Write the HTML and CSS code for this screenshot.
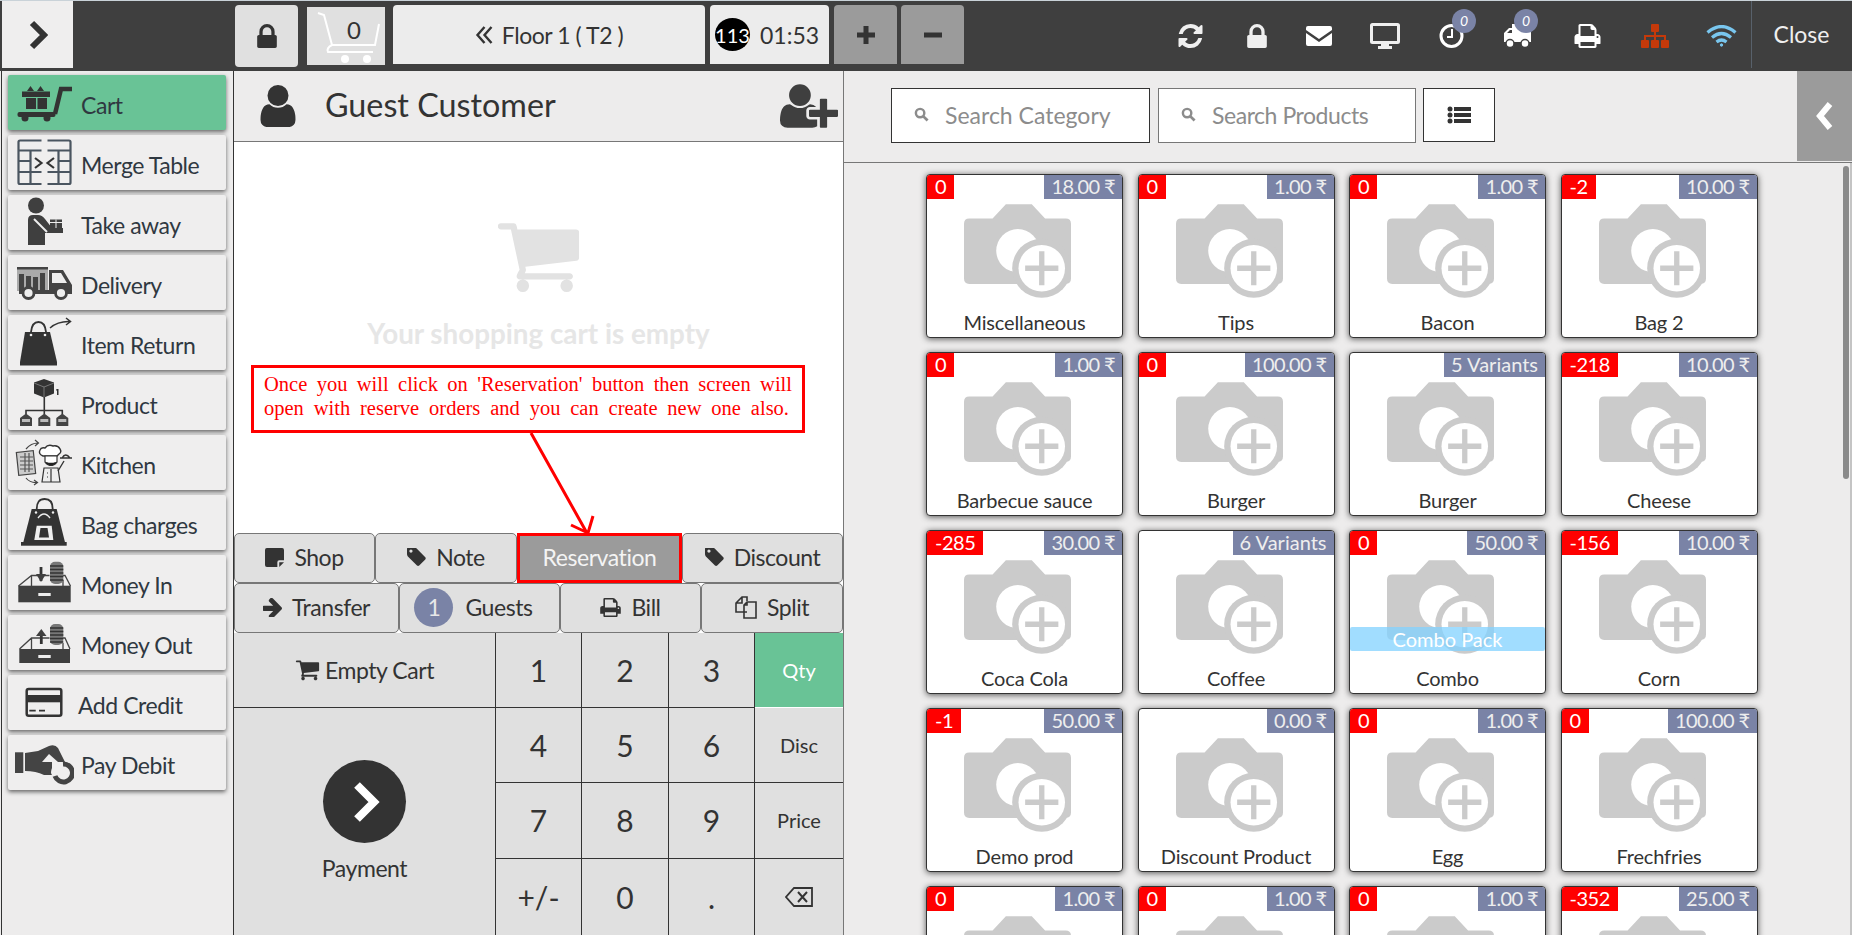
FILE: index.html
```html
<!DOCTYPE html>
<html lang="en">
<head>
    <meta charset="UTF-8">
    <title>POS</title>
    <link rel="stylesheet" href="styles.css">
</head>
<body>
    <svg class="defs">
        <symbol id="cam" viewBox="0 0 322 282">
            <path d="M16 43h70l40-43h78l40 43h62q16 0 16 16v165q0 16-16 16H16q-16 0-16-16V59q0-16 16-16z" fill="#cbcbcb"/>
            <circle cx="162" cy="140" r="65" fill="#fff"/>
            <circle cx="234" cy="193" r="89" fill="#cbcbcb"/>
            <circle cx="234" cy="193" r="70" fill="#fff"/>
            <path d="M184 185h42v-43h16v43h42v16h-42v43h-16v-43h-42z" fill="#cbcbcb"/>
        </symbol>
        <symbol id="fa-cart" viewBox="0 0 1664 1792"><path d="M640 1536q0 52-38 90t-90 38-90-38-38-90 38-90 90-38 90 38 38 90zm896 0q0 52-38 90t-90 38-90-38-38-90 38-90 90-38 90 38 38 90zm128-1088v512q0 24-16.5 42.5t-40.5 21.5l-1044 122q13 60 13 70 0 16-24 64h920q26 0 45 19t19 45-19 45-45 19h-1024q-26 0-45-19t-19-45q0-11 8-31.5t16-36 21.5-40 15.5-29.5l-177-823h-204q-26 0-45-19t-19-45 19-45 45-19h256q16 0 28.5 6.5t19.5 15.5 13 24.5 8 26 5.5 29.5 4.5 26h1201q26 0 45 19t19 45z"/></symbol>
        <symbol id="fa-lock" viewBox="320 128 1152 1408"><path d="M640 768h512v-192q0-106-75-181t-181-75-181 75-75 181v192zm832 96v576q0 40-28 68t-68 28h-960q-40 0-68-28t-28-68v-576q0-40 28-68t68-28h32v-192q0-184 132-316t316-132 316 132 132 316v192h32q40 0 68 28t28 68z"/></symbol>
        <symbol id="fa-tag" viewBox="128 192 1536 1536"><path d="M576 448q0-53-37.5-90.5t-90.5-37.5-90.5 37.5-37.5 90.5 37.5 90.5 90.5 37.5 90.5-37.5 37.5-90.5zm1067 576q0 53-37 90l-491 492q-39 37-91 37-53 0-90-37l-715-716q-38-37-64.5-101t-26.5-117v-416q0-52 38-90t90-38h416q53 0 117 26.5t102 64.5l715 714q37 39 37 91z"/></symbol>
        <symbol id="fa-print" viewBox="64 128 1664 1536"><path d="M448 1536h896v-256h-896v256zm0-640h896v-384h-160q-40 0-68-28t-28-68v-160h-640v640zm1152 64q0-26-19-45t-45-19-45 19-19 45 19 45 45 19 45-19 19-45zm128 0v416q0 13-9.5 22.5t-22.5 9.5h-224v160q0 40-28 68t-68 28h-960q-40 0-68-28t-28-68v-160h-224q-13 0-22.5-9.5t-9.5-22.5v-416q0-79 56.5-135.5t135.5-56.5h64v-544q0-40 28-68t68-28h672q40 0 88 20t76 48l152 152q28 28 48 76t20 88v256h64q79 0 135.5 56.5t56.5 135.5z"/></symbol>
        <symbol id="search" viewBox="0 0 16 16"><circle cx="6.5" cy="6.5" r="4.5" fill="none" stroke="currentColor" stroke-width="2.6"/><path d="M10 10l4.5 4.5" stroke="currentColor" stroke-width="3"/></symbol>
    </svg>

    <header class="topbar">
        <div class="toggle">
            <svg width="20" height="30" viewBox="0 0 20 30"><path d="M4 3l12 12L4 27" fill="none" stroke="#333" stroke-width="6"/></svg>
        </div>
        <button class="top-btn lock-btn"><svg width="20" height="24" fill="#333"><use href="#fa-lock"/></svg></button>
        <div class="cart-count">
            <svg width="78" height="58" viewBox="0 0 78 58"><path d="M11 6l6 2 8 30h43l4-21M25 38q-6 3-4 7h45" fill="none" stroke="#fff" stroke-width="2"/><circle cx="38" cy="52" r="4" fill="#fff"/><circle cx="60" cy="52" r="4" fill="#fff"/></svg>
            <span class="cart-num">0</span>
        </div>
        <button class="top-btn floor-btn">
            <svg width="19" height="20" viewBox="0 0 18 20"><path d="M9 2L2 10l7 8M16 2l-7 8 7 8" fill="none" stroke="#333" stroke-width="2.4"/></svg>
            <span class="tight">Floor 1 ( T2 )</span>
        </button>
        <button class="top-btn timer-btn"><span class="timer-badge">113</span> 01:53</button>
        <button class="top-btn grey-btn"><svg width="20" height="20" viewBox="0 0 20 20"><path d="M10 1v18M1 10h18" stroke="#333" stroke-width="5"/></svg></button>
        <button class="top-btn grey-btn"><svg width="20" height="20" viewBox="0 0 20 20"><path d="M1 10h18" stroke="#333" stroke-width="5"/></svg></button>

        <div class="status-icons">
            <div class="status"><svg width="25" height="24" viewBox="128 128 1536 1536" fill="#efefef"><path d="M1639 1056q0 5-1 7-64 268-268 434.5t-478 166.5q-146 0-282.5-55t-243.5-157l-129 129q-19 19-45 19t-45-19-19-45v-448q0-26 19-45t45-19h448q26 0 45 19t19 45-19 45l-137 137q71 66 161 102t187 36q134 0 250-65t186-179q11-17 53-117 8-23 30-23h192q13 0 22.5 9.5t9.5 22.5zm25-800v448q0 26-19 45t-45 19h-448q-26 0-45-19t-19-45 19-45l138-138q-148-137-349-137-134 0-250 65t-186 179q-11 17-53 117-8 23-30 23h-199q-13 0-22.5-9.5t-9.5-22.5v-7q65-268 270-434.5t480-166.5q146 0 284 55.5t245 156.5l130-129q19-19 45-19t45 19 19 45z"/></svg></div>
            <div class="status"><svg width="20" height="24" fill="#efefef"><use href="#fa-lock"/></svg></div>
            <div class="status"><svg width="26" height="20" viewBox="0 0 26 20"><path d="M2 0h22q2 0 2 2v2L13 13 0 4V2q0-2 2-2zM0 7l13 9 13-9v11q0 2-2 2H2q-2 0-2-2z" fill="#fff"/></svg></div>
            <div class="status"><svg width="30" height="26" viewBox="0 0 30 26"><rect x="1.5" y="1.5" width="27" height="18" rx="1" fill="#3f3f3f" stroke="#efefef" stroke-width="3"/><path d="M11 21h8v2h3v3H8v-3h3z" fill="#efefef"/></svg></div>
            <div class="status">
                <svg width="25" height="24" viewBox="0 0 25 24"><circle cx="12.5" cy="12" r="10.5" fill="none" stroke="#fff" stroke-width="3"/><path d="M13 5v8H8" fill="none" stroke="#fff" stroke-width="2"/></svg>
                <span class="status-badge">0</span>
            </div>
            <div class="status">
                <svg width="27" height="24" viewBox="0 0 27 24"><path d="M8 0h19v18H0V9l5-5h3zM3 9h5V6H6z" fill="#fff" fill-rule="evenodd"/><circle cx="6" cy="19.500" r="4" fill="#fff" stroke="#3f3f3f" stroke-width="1.500"/><circle cx="21" cy="19.500" r="4" fill="#fff" stroke="#3f3f3f" stroke-width="1.500"/></svg>
                <span class="status-badge badge-truck">0</span>
            </div>
            <div class="status"><svg width="27" height="24" fill="#fff"><use href="#fa-print"/></svg></div>
            <div class="status"><svg width="28" height="24" viewBox="0 0 28 24" fill="#c4390a"><rect x="10" y="0" width="8" height="8" rx="1"/><rect x="0" y="16" width="8" height="8" rx="1"/><rect x="10" y="16" width="8" height="8" rx="1"/><rect x="20" y="16" width="8" height="8" rx="1"/><path d="M13 8h2v3h10v5h-2v-3h-8v3h-2v-3H5v3H3v-5h10z"/></svg></div>
            <div class="status"><svg width="31" height="22" viewBox="0 0 31 22" fill="none" stroke="#79c6ee" stroke-width="3.200"><path d="M1.500 7.500q14-12 28 0M6 12.500q9.500-8 19 0M10.500 17q5-4 10 0"/><circle cx="15.500" cy="20" r="1.200" fill="#79c6ee" stroke-width="1"/></svg></div>
        </div>
        <div class="close-btn">Close</div>
    </header>

    <main class="layout">
        <aside class="sidebar">
            <a class="side-item active">
                <svg class="side-ico" viewBox="0 0 60 55" fill="#333"><path d="M13 16l3.500-5 3.500 5zM23 16l3.500-5 3.500 5z"/><rect x="8" y="16.500" width="28" height="5.500"/><path d="M12 23h10v11H12zM23.500 23H33v11h-9.500z"/><path d="M58 14H47l-6 25" fill="none" stroke="#333" stroke-width="4.500"/><rect x="3.500" y="37" width="38" height="5" rx="2"/><circle cx="11" cy="43" r="3.500"/><circle cx="33" cy="43" r="3.500"/></svg>
                <span class="side-label">Cart</span>
            </a>
            <a class="side-item">
                <svg class="side-ico" viewBox="0 0 60 55" fill="none" stroke="#4a5560" stroke-width="2.200"><path d="M27.500 5.500H6q-1.500 0-1.500 1.500v40.500q0 1.500 1.500 1.500h21.500M4.500 15.500h23M4.500 26h12M4.500 37h23M16.500 15.500V49"/><path d="M33.500 5.500H55q1.500 0 1.500 1.500v40.500q0 1.500-1.500 1.500H33.500M33.500 15.500h23M44.500 26h12M33.500 37h23M44.500 15.500V49"/><path d="M21 23l6.500 5-6.500 5M40 23l-6.500 5 6.500 5" stroke="#333"/></svg>
                <span class="side-label">Merge Table</span>
            </a>
            <a class="side-item">
                <svg class="side-ico" viewBox="0 0 60 55" fill="#3f3f3f"><circle cx="22" cy="10.500" r="8"/><path d="M14 25q0-5 5-5h5q4 0 7 4l7 9h11v5H31v12H14z"/><path d="M20 24l13 13" stroke="#eee" stroke-width="2" fill="none"/><rect x="36" y="24.500" width="12" height="8.500"/><path d="M36 27.500h12M42 24.500V33" stroke="#eee"/></svg>
                <span class="side-label">Take away</span>
            </a>
            <a class="side-item">
                <svg class="side-ico" viewBox="0 0 60 55" fill="#444"><rect x="3" y="13" width="31" height="23" fill="#aaa"/><rect x="3" y="12" width="31" height="2.500"/><path d="M5 19h5v16H5zM12 21h5v14h-5zM19 22h5v13h-5zM26 18h5v17h-5z"/><path d="M35 15h14l9 15v9H5v-4h30z"/><path d="M38 18h9l6 10H38z" fill="#eee"/><circle cx="14.500" cy="38" r="5.500" fill="#eee" stroke="#444" stroke-width="2.800"/><circle cx="47" cy="38" r="5.500" fill="#eee" stroke="#444" stroke-width="2.800"/></svg>
                <span class="side-label">Delivery</span>
            </a>
            <a class="side-item">
                <svg class="side-ico" viewBox="0 0 60 55" fill="#333"><path d="M11 17h25l7 30H6z"/><rect x="6" y="47" width="37" height="3.500"/><path d="M17 17q1-10 7.500-10T32 17" fill="none" stroke="#333" stroke-width="1.800"/><circle cx="17" cy="20" r="1.300" fill="#eee"/><circle cx="31" cy="20" r="1.300" fill="#eee"/><path d="M36 13q8-7 20-6.500M52 3l4.500 3.500-4.500 3.500" fill="none" stroke="#333" stroke-width="1.500"/></svg>
                <span class="side-label">Item Return</span>
            </a>
            <a class="side-item">
                <svg class="side-ico" viewBox="0 0 60 55" fill="#333"><path d="M30 4l10 3.500v11l-10 4-10-4v-11z"/><path d="M20 8l10 4 10-4M30 12v10" stroke="#777" fill="none"/><path d="M42.500 14h2v6h-1.500v-4.500h-1z"/><path d="M30.300 22v14M12 39v-3.500h36.300V39M30.300 35.500V39" fill="none" stroke="#333" stroke-width="1.600"/><path d="M6 43l6-4.500 6 4.500v8H6zM24.300 43l6-4.500 6 4.500v8h-12zM42.300 43l6-4.500 6 4.500v8h-12z" fill="#444"/><path d="M8 44h8v3H8zM26.300 44h8v3h-8zM44.300 44h8v3h-8z" fill="#bbb"/></svg>
                <span class="side-label">Product</span>
            </a>
            <a class="side-item">
                <svg class="side-ico" viewBox="0 0 60 55" fill="none" stroke="#444" stroke-width="1.200"><rect x="3.500" y="16.500" width="17" height="23" transform="rotate(-6 12 28)" fill="#ccc"/><path d="M6 22h13M6 26h13M6 30h13M6 34h13M11 18v19M15 18v19" stroke="#555"/><path d="M12 14q5-6 12-6M21 5l3.500 3-3.500 3M12 43q4 5 11 4.500M20 45l3.500 2.500L20 50"/><path d="M29 21q-5-2-3-6 1-3 5-2 3-4 8-2 5-1 7 3 2 3-1 5l-2 2z" fill="#fff" stroke="#333" stroke-width="1.400"/><path d="M31 21h12v6q-6 7-12 0z" fill="#fff" stroke="#333"/><path d="M32 28q5 2 10 0" stroke="#222" stroke-width="2.400"/><path d="M30 33h14l2 14H28z" fill="#eee" stroke="#333" stroke-width="1.200"/><path d="M37 34v13M33 38h1M33 42h1" stroke="#333"/><path d="M44 36l6-10M46 23h12M48 23q3.500-6 8 0" stroke="#333" stroke-width="1.400"/></svg>
                <span class="side-label">Kitchen</span>
            </a>
            <a class="side-item">
                <svg class="side-ico" viewBox="0 0 60 55" fill="#333"><path d="M17.700 14h25l8.300 33.300H9.300z"/><rect x="7" y="47" width="45.700" height="3.700"/><path d="M22.700 14q0-10 8-10t8 10" fill="none" stroke="#333" stroke-width="1.800"/><path d="M24 23q6-8 12 0" fill="none" stroke="#eee" stroke-width="1.400"/><circle cx="22" cy="17.500" r="1.200" fill="#eee"/><circle cx="39" cy="17.500" r="1.200" fill="#eee"/><path d="M22.700 30.700h15l1.600 14.300h-19z" fill="#eee"/><path d="M26.500 33h7l1.500 9.500H25z"/></svg>
                <span class="side-label">Bag charges</span>
            </a>
            <a class="side-item">
                <svg class="side-ico" viewBox="0 0 60 55" fill="#3f3f3f"><path d="M4.500 31l13-10.500h18M49 20.500h2l5.500 10.500M17.500 20.500V31M49 25v6" fill="none" stroke="#444" stroke-width="1.300"/><rect x="4.300" y="30.700" width="52.400" height="16.600"/><rect x="24.300" y="38" width="12.400" height="3" fill="#eee"/><path d="M27 12v14" stroke="#333" stroke-width="2.800"/><path d="M22 19h10l-5 8z"/><rect x="36" y="6.700" width="13.300" height="22.300" rx="5" fill="#777"/><path d="M36 11h13.300M36 14.500h13.300M36 18h13.300M36 21.500h13.300M36 25h13.300" stroke="#333" stroke-width="1.300"/></svg>
                <span class="side-label">Money In</span>
            </a>
            <a class="side-item">
                <svg class="side-ico" viewBox="0 0 60 55" fill="#3f3f3f"><path d="M5.500 34l12-11h18M49 23h2l5 11M17.500 23v11M49 28v6" fill="none" stroke="#444" stroke-width="1.300"/><rect x="5.300" y="34" width="50.700" height="14"/><rect x="24.300" y="40" width="12.400" height="3" fill="#eee"/><path d="M27.300 19v10" stroke="#333" stroke-width="2.800"/><path d="M22 21h10.500l-5.200-7z"/><rect x="36" y="9" width="13.300" height="21" rx="5" fill="#777"/><path d="M36 13h13.300M36 16.500h13.300M36 20h13.300M36 23.500h13.300M36 27h13.300" stroke="#333" stroke-width="1.300"/></svg>
                <span class="side-label">Money Out</span>
            </a>
            <a class="side-item side-credit">
                <svg class="side-ico" viewBox="0 0 60 55" fill="#333"><rect x="12.700" y="14" width="34.600" height="26.700" rx="2" fill="none" stroke="#333" stroke-width="2.500"/><rect x="12.700" y="20" width="34.600" height="7.300"/><path d="M15.300 34.700h6.400v1.800h-6.400zM25 34.700h6v1.800h-6z"/></svg>
                <span class="side-label">Add Credit</span>
            </a>
            <a class="side-item">
                <svg class="side-ico" viewBox="0 0 60 55" fill="#444"><rect x="1" y="17.300" width="8.300" height="20.700"/><path d="M11 18l13-2 11-5q6-2 9 2l7 14h-7l-9-8-7 8h10v6q-2 5 0 7H30q-8-4-19-4z"/><path d="M41 41a9 9 0 1 0 8-12" fill="none" stroke="#444" stroke-width="5"/></svg>
                <span class="side-label">Pay Debit</span>
            </a>
        </aside>

        <section class="order">
            <div class="order-head">
                <svg class="user-ico" width="36" height="42" viewBox="256 128 1280 1536" fill="#333"><path d="M1536 1399q0 109-62.5 187t-150.5 78h-854q-88 0-150.500-78t-62.500-187q0-85 8.500-160.500t31.500-152 58.500-131 94-89 134.500-34.500q131 128 313 128t313-128q76 0 134.500 34.500t94 89 58.500 131 31.500 152 8.500 160.500zm-256-887q0 159-112.500 271.500t-271.500 112.500-271.500-112.500-112.500-271.500 112.500-271.500 271.500-112.500 271.500 112.500 112.500 271.500z"/></svg>
                <h1 class="customer">Guest Customer</h1>
                <svg class="add-user" width="58" height="44" viewBox="0 128 2048 1536" fill="#3f3f3f"><path d="M704 896q-159 0-271.500-112.500t-112.500-271.500 112.500-271.500 271.500-112.500 271.500 112.500 112.500 271.500-112.500 271.500-271.500 112.500zm960 128h352q13 0 22.500 9.500t9.500 22.500v192q0 13-9.500 22.500t-22.500 9.500h-352v352q0 13-9.500 22.500t-22.500 9.500h-192q-13 0-22.500-9.500t-9.500-22.500v-352h-352q-13 0-22.500-9.500t-9.500-22.500v-192q0-13 9.500-22.500t22.500-9.500h352v-352q0-13 9.500-22.500t22.500-9.500h192q13 0 22.500 9.500t9.500 22.500v352zm-736 224q0 52 38 90t90 38h256v238q-68 50-171 50h-874q-121 0-194-69t-73-190q0-53 3.500-103.500t14-109 26.500-108.500 43-97.500 62-81 85.500-53.500 111.500-20q19 0 39 17 79 61 154.500 91.500t164.500 30.500 164.500-30.500 154.500-91.500q20-17 39-17 132 0 217 96h-223q-52 0-90 38t-38 90v192z"/></svg>
            </div>
            <div class="cart-empty">
                <svg class="empty-ico" width="83" height="72" viewBox="0 192 1664 1472" fill="#e2e2e2"><use href="#fa-cart" width="1664" height="1792" y="0"/></svg>
                <p class="empty-text">Your shopping cart is empty</p>
                <div class="note">
                    <span class="note-line">Once you will click on 'Reservation' button then screen will</span>
                    <span class="note-line note-last">open with reserve orders and you can create new one also.</span>
                </div>
                <svg class="note-arrow" width="80" height="104" viewBox="0 0 80 104"><path d="M3 1l56.500 101M43 93l17 8 5-17" fill="none" stroke="#f00" stroke-width="3"/></svg>
            </div>
            <div class="tabs tabs-one">
                <button class="tab"><svg width="19" height="19" viewBox="0 0 20 20" fill="#333"><path d="M2 0h16q2 0 2 2v11h-5q-2 0-2 2v5H2q-2 0-2-2V2q0-2 2-2zM15 15h5l-5 5z"/></svg> Shop</button>
                <button class="tab"><svg width="19" height="19" fill="#333"><use href="#fa-tag"/></svg> Note</button>
                <button class="tab tab-marked">Reservation</button>
                <button class="tab"><svg width="19" height="19" fill="#333"><use href="#fa-tag"/></svg> Discount</button>
            </div>
            <div class="tabs tabs-two">
                <button class="tab"><svg width="19" height="19" viewBox="192 192 1408 1408" fill="#333"><path d="M1600 960q0 54-37 91l-651 651q-39 37-91 37-51 0-90-37l-75-75q-38-38-38-91t38-91l293-293h-704q-52 0-84.500-37.500t-32.500-90.500v-128q0-53 32.500-90.500t84.500-37.500h704l-293-294q-38-36-38-90t38-90l75-75q38-38 90-38 53 0 91 38l651 651q37 35 37 90z"/></svg> Transfer</button>
                <button class="tab tab-guests"><span class="guest-badge">1</span> Guests</button>
                <button class="tab"><svg width="21" height="19" fill="#333"><use href="#fa-print"/></svg> Bill</button>
                <button class="tab"><svg width="22" height="23" viewBox="0 0 22 23" fill="none" stroke="#333" stroke-width="1.600"><path d="M12 16H1V7l6-6h5v4M7 1v6H1"/><path d="M12 6h9v16H9V9zM12 6v3H9"/></svg> Split</button>
            </div>
            <div class="numpad">
                <button class="pad pad-empty"><svg width="25" height="25" fill="#333"><use href="#fa-cart"/></svg> Empty Cart</button>
                <button class="pad pad-num">1</button>
                <button class="pad pad-num">2</button>
                <button class="pad pad-num">3</button>
                <button class="pad pad-mode pad-on">Qty</button>
                <button class="pad pad-pay">
                    <span class="pay-circle"><svg width="30" height="42" viewBox="0 0 30 42"><path d="M5 4l17 17L5 38" fill="none" stroke="#fff" stroke-width="8"/></svg></span>
                    Payment
                </button>
                <button class="pad pad-num">4</button>
                <button class="pad pad-num">5</button>
                <button class="pad pad-num">6</button>
                <button class="pad pad-mode">Disc</button>
                <button class="pad pad-num">7</button>
                <button class="pad pad-num">8</button>
                <button class="pad pad-num">9</button>
                <button class="pad pad-mode">Price</button>
                <button class="pad pad-num">+/-</button>
                <button class="pad pad-num">0</button>
                <button class="pad pad-num">.</button>
                <button class="pad pad-mode"><svg width="28" height="20" viewBox="0 0 28 20" fill="none" stroke="#333" stroke-width="1.800"><path d="M9 1h18v18H9l-8-9z"/><path d="M13 5l9 10M22 5l-9 10" stroke-width="2"/></svg></button>
            </div>
        </section>

        <section class="catalog">
            <div class="search-row">
                <div class="search search-cat"><svg width="15" height="15"><use href="#search"/></svg><span>Search Category</span></div>
                <div class="search search-prod"><svg width="15" height="15"><use href="#search"/></svg><span class="tight">Search Products</span></div>
                <button class="list-btn"><svg width="24" height="18" viewBox="0 0 24 18" fill="#333"><circle cx="3" cy="3" r="2.500"/><circle cx="3" cy="9" r="2.500"/><circle cx="3" cy="15" r="2.500"/><rect x="7" y="1" width="17" height="4"/><rect x="7" y="7" width="17" height="4"/><rect x="7" y="13" width="17" height="4"/></svg></button>
                <div class="side-arrow"><svg width="18" height="30" viewBox="0 0 18 30"><path d="M14 3L4 15l10 12" fill="none" stroke="#fff" stroke-width="6"/></svg></div>
            </div>
            <div class="products">
                <div class="card"><div class="card-top"><span class="stock">0</span><span class="price">18.00 ₹</span></div><svg class="cam"><use href="#cam"/></svg><div class="name">Miscellaneous</div></div>
                <div class="card"><div class="card-top"><span class="stock">0</span><span class="price">1.00 ₹</span></div><svg class="cam"><use href="#cam"/></svg><div class="name">Tips</div></div>
                <div class="card"><div class="card-top"><span class="stock">0</span><span class="price">1.00 ₹</span></div><svg class="cam"><use href="#cam"/></svg><div class="name">Bacon</div></div>
                <div class="card"><div class="card-top"><span class="stock">-2</span><span class="price">10.00 ₹</span></div><svg class="cam"><use href="#cam"/></svg><div class="name">Bag 2</div></div>

                <div class="card"><div class="card-top"><span class="stock">0</span><span class="price">1.00 ₹</span></div><svg class="cam"><use href="#cam"/></svg><div class="name">Barbecue sauce</div></div>
                <div class="card"><div class="card-top"><span class="stock">0</span><span class="price">100.00 ₹</span></div><svg class="cam"><use href="#cam"/></svg><div class="name">Burger</div></div>
                <div class="card"><div class="card-top"><span class="price price-var">5 Variants</span></div><svg class="cam"><use href="#cam"/></svg><div class="name">Burger</div></div>
                <div class="card"><div class="card-top"><span class="stock">-218</span><span class="price">10.00 ₹</span></div><svg class="cam"><use href="#cam"/></svg><div class="name">Cheese</div></div>

                <div class="card"><div class="card-top"><span class="stock">-285</span><span class="price">30.00 ₹</span></div><svg class="cam"><use href="#cam"/></svg><div class="name">Coca Cola</div></div>
                <div class="card"><div class="card-top"><span class="price price-var">6 Variants</span></div><svg class="cam"><use href="#cam"/></svg><div class="name">Coffee</div></div>
                <div class="card"><div class="card-top"><span class="stock">0</span><span class="price">50.00 ₹</span></div><svg class="cam"><use href="#cam"/></svg><div class="combo">Combo Pack</div><div class="name">Combo</div></div>
                <div class="card"><div class="card-top"><span class="stock">-156</span><span class="price">10.00 ₹</span></div><svg class="cam"><use href="#cam"/></svg><div class="name">Corn</div></div>

                <div class="card"><div class="card-top"><span class="stock">-1</span><span class="price">50.00 ₹</span></div><svg class="cam"><use href="#cam"/></svg><div class="name">Demo prod</div></div>
                <div class="card"><div class="card-top"><span class="price">0.00 ₹</span></div><svg class="cam"><use href="#cam"/></svg><div class="name">Discount Product</div></div>
                <div class="card"><div class="card-top"><span class="stock">0</span><span class="price">1.00 ₹</span></div><svg class="cam"><use href="#cam"/></svg><div class="name">Egg</div></div>
                <div class="card"><div class="card-top"><span class="stock">0</span><span class="price">100.00 ₹</span></div><svg class="cam"><use href="#cam"/></svg><div class="name">Frechfries</div></div>

                <div class="card"><div class="card-top"><span class="stock">0</span><span class="price">1.00 ₹</span></div><svg class="cam"><use href="#cam"/></svg></div>
                <div class="card"><div class="card-top"><span class="stock">0</span><span class="price">1.00 ₹</span></div><svg class="cam"><use href="#cam"/></svg></div>
                <div class="card"><div class="card-top"><span class="stock">0</span><span class="price">1.00 ₹</span></div><svg class="cam"><use href="#cam"/></svg></div>
                <div class="card"><div class="card-top"><span class="stock">-352</span><span class="price">25.00 ₹</span></div><svg class="cam"><use href="#cam"/></svg></div>
                <div class="scroll-thumb"></div>
            </div>
        </section>
    </main>
</body>
</html>
```

FILE: styles.css
```css
* {
    box-sizing: border-box;
}
html, body {
    height: 100%;
}
body {
    margin: 0;
    overflow: hidden;
    background-color: #edecec;
    font-family: Lato, "Liberation Sans", sans-serif;
    color: #333;
}
button {
    font-family: inherit;
    color: inherit;
    padding: 0;
}
.defs {
    position: absolute;
    width: 0;
    height: 0;
}
.tight {
    letter-spacing: -0.45px;
}

/* top bar */
.topbar {
    display: flex;
    align-items: flex-start;
    height: 71px;
    padding-left: 2px;
    background-color: #3f3f3f;
    border-top: 1px solid #c9d2d8;
}
.toggle {
    display: flex;
    align-items: center;
    justify-content: center;
    width: 71px;
    height: 67px;
    background-color: #efeeee;
}
.top-btn {
    display: flex;
    align-items: center;
    justify-content: center;
    height: 59px;
    margin-top: 4px;
    border: 0;
    border-radius: 4px 4px 0 0;
    background-color: #ececec;
    font-size: 23px;
}
.lock-btn {
    width: 63px;
    height: 62px;
    margin-left: 162px;
    background-color: #e0e0e0;
    border-radius: 4px;
}
.cart-count {
    position: relative;
    width: 78px;
    height: 58px;
    margin: 6px 0 0 9px;
    background-color: #e0e0e0;
}
.cart-count svg {
    position: absolute;
    left: 0;
    top: 0;
}
.cart-num {
    position: absolute;
    left: 40px;
    top: 8px;
    font-size: 24px;
}
.floor-btn {
    width: 312px;
    margin-left: 8px;
    gap: 8px;
}
.timer-btn {
    width: 119px;
    margin-left: 5px;
    gap: 10px;
    justify-content: flex-start;
    padding-left: 5px;
}
.timer-badge {
    display: flex;
    align-items: center;
    justify-content: center;
    width: 35px;
    height: 33px;
    border-radius: 50%;
    background-color: #000;
    color: #fff;
    font-size: 20px;
}
.grey-btn {
    width: 63px;
    margin-left: 4px;
    background-color: #9b9b9b;
}
.timer-btn + .grey-btn {
    margin-left: 5px;
}
.status-icons {
    display: grid;
    grid-template-columns: 66px 68px 56px 76px 56px 76px 64px 72px 60px;
    margin-left: 193px;
    height: 69px;
}
.status {
    position: relative;
    display: flex;
    align-items: center;
    justify-content: center;
}
.status-badge {
    position: absolute;
    top: 8px;
    left: 29px;
    width: 24px;
    height: 24px;
    border-radius: 50%;
    background-color: #7a83a6;
    color: #fff;
    font-size: 14px;
    font-style: italic;
    line-height: 24px;
    text-align: center;
}
.badge-truck {
    left: 35px;
}
.close-btn {
    width: 100px;
    height: 67px;
    border-left: 1px solid #58616b;
    color: #efefef;
    font-size: 23px;
    line-height: 66px;
    text-align: center;
}

/* main columns */
.layout {
    display: flex;
    height: 864px;
}
.sidebar {
    flex: none;
    width: 232px;
    margin-left: 1px;
    padding: 4px 7px 0 6px;
    background-color: #edecec;
    border-left: 1px solid #333;
}
.side-item {
    display: flex;
    align-items: center;
    height: 55px;
    margin-bottom: 5px;
    background-color: #efeeee;
    box-shadow: 0 2px 4px #666;
    border-radius: 2px;
    font-size: 23px;
    letter-spacing: -0.45px;
    color: #2f3841;
}
.side-item.active {
    background-color: #69c396;
}
.side-label {
    padding-top: 5px;
}
.side-ico {
    flex: none;
    align-self: stretch;
    width: 60px;
    height: 55px;
    margin: 0 7px 0 6px;
}
.side-credit .side-ico {
    margin-right: 4px;
}

/* order column */
.order {
    flex: none;
    display: flex;
    flex-direction: column;
    width: 611px;
    border-left: 1px solid #333;
    border-right: 1px solid #777;
    background-color: #fff;
}
.order-head {
    display: flex;
    align-items: center;
    flex: none;
    height: 71px;
    padding: 0 5px 0 26px;
    background-color: #edecec;
    border-bottom: 1px solid #777;
}
.customer {
    margin: 0 0 4px 29px;
    font-size: 32.3px;
    font-weight: 400;
    color: #333;
}
.add-user {
    margin-left: auto;
}
.cart-empty {
    position: relative;
    flex: 1;
    text-align: center;
    padding-top: 78px;
}
.empty-ico {
    display: block;
    margin: 0 auto;
}
.empty-text {
    margin: 25px 0 0;
    font-size: 27.8px;
    font-weight: 700;
    color: #e6e6e6;
}
.note {
    position: absolute;
    left: 17px;
    top: 223px;
    width: 554px;
    height: 68px;
    padding: 4px 10px;
    border: 3px solid #f00;
    font-family: "Liberation Serif", serif;
    font-size: 20.5px;
    line-height: 24px;
    color: #f00;
    background-color: #fff;
}
.note-line {
    display: block;
    text-align: justify;
    text-align-last: justify;
}
.note-last {
    padding-right: 3px;
}
.note-arrow {
    position: absolute;
    left: 294px;
    top: 290px;
    z-index: 2;
}
.tabs {
    display: grid;
    flex: none;
    height: 50px;
}
.tabs-one {
    grid-template-columns: 141px 142px 165px 161px;
}
.tabs-two {
    grid-template-columns: 165px 161px 141px 142px;
}
.tab {
    display: flex;
    align-items: center;
    justify-content: center;
    gap: 10px;
    padding-bottom: 2px;
    background-color: #e0e0e0;
    border: 1px solid #777;
    border-radius: 5px;
    font-size: 23px;
    letter-spacing: -0.45px;
}
.tab-guests {
    padding-right: 12px;
}
.tab-marked {
    background-color: #9b9b9b;
    border: 3px solid #f00;
    border-radius: 0;
    color: #f4f4f4;
}
.guest-badge {
    width: 39px;
    height: 39px;
    margin-right: 2px;
    border-radius: 50%;
    background-color: #7a83a6;
    color: #e8e8e8;
    line-height: 39px;
}
.numpad {
    display: grid;
    flex: none;
    height: 302px;
    grid-template-columns: 262px 86px 87px 86px 88px;
    grid-template-rows: 75px 75px 76px 76px;
    background-color: #e0e0e0;
}
.pad {
    display: flex;
    align-items: center;
    justify-content: center;
    padding-bottom: 1px;
    background-color: #e0e0e0;
    border: 0;
    border-right: 1px solid #333;
    border-bottom: 1px solid #333;
    font-size: 30px;
    color: #333;
}
.pad-mode {
    border-right: 0;
    font-size: 20px;
}
.pad-on {
    background-color: #69c396;
    color: #fff;
    border-bottom-color: #fff;
}
.pad-empty {
    gap: 5px;
    font-size: 23px;
    letter-spacing: -0.45px;
}
.pad-pay {
    grid-row: span 3;
    flex-direction: column;
    gap: 11px;
    border-bottom: 0;
    font-size: 23px;
    letter-spacing: -0.45px;
}
.pay-circle {
    display: flex;
    align-items: center;
    justify-content: center;
    width: 83px;
    height: 83px;
    padding-left: 5px;
    border-radius: 50%;
    background-color: #333;
}
.numpad .pad:nth-last-child(-n+4) {
    border-bottom: 0;
}

/* catalog column */
.catalog {
    position: relative;
    flex: 1;
    overflow: hidden;
    background-color: #edecec;
}
.search-row {
    display: flex;
    align-items: flex-start;
    height: 92px;
    padding: 17px 0 0 47px;
    border-bottom: 1px solid #777;
}
.search {
    display: flex;
    align-items: center;
    gap: 16px;
    height: 55px;
    padding: 0 0 2px 22px;
    background-color: #fff;
    font-size: 23px;
    color: #8c8c8c;
}
.search svg {
    flex: none;
    color: #8c8c8c;
}
.search-cat {
    width: 259px;
    border: 1px solid #333;
}
.search-prod {
    width: 258px;
    margin-left: 8px;
    border: 1px solid #777;
}
.list-btn {
    display: flex;
    align-items: center;
    justify-content: center;
    width: 72px;
    height: 54px;
    margin-left: 7px;
    background-color: #fff;
    border: 1px solid #333;
}
.side-arrow {
    position: absolute;
    top: 0;
    right: 0;
    display: flex;
    align-items: center;
    justify-content: center;
    width: 55px;
    height: 90px;
    background-color: #9b9b9b;
}
.products {
    position: relative;
    display: grid;
    grid-template-columns: repeat(4, 197px);
    grid-auto-rows: 164px;
    column-gap: 14.5px;
    row-gap: 14px;
    height: 772px;
    padding: 11px 0 0 82px;
    border-right: 2px solid #c4c4c4;
}
.scroll-thumb {
    position: absolute;
    top: 3px;
    right: 1px;
    width: 6px;
    height: 313px;
    border-radius: 3px;
    background-color: #8a8a8a;
}
.card {
    position: relative;
    display: flex;
    flex-direction: column;
    background-color: #fff;
    border: 1px solid #333;
    border-radius: 4px;
    box-shadow: 0 1px 6px #555;
    overflow: hidden;
}
.card-top {
    display: flex;
    flex: none;
    height: 24px;
    font-size: 20px;
    line-height: 23px;
}
.stock {
    padding: 0 8px;
    background-color: #f00;
    color: #fff;
    letter-spacing: -0.5px;
}
.price {
    margin-left: auto;
    padding: 0 7px;
    background-color: #7a83a6;
    color: #eee;
    letter-spacing: -0.6px;
}
.price-var {
    letter-spacing: 0;
}
.cam {
    flex: none;
    width: 107px;
    height: 94px;
    margin: 5px 0 0 37px;
}
.name {
    margin-top: auto;
    padding-bottom: 3px;
    font-size: 20px;
    letter-spacing: -0.15px;
    line-height: 24px;
    text-align: center;
}
.combo {
    position: absolute;
    left: 0;
    right: 0;
    top: 96px;
    height: 24px;
    background-color: rgba(130, 210, 255, 0.75);
    border-radius: 2px;
    color: #fff;
    font-size: 20px;
    line-height: 24px;
    text-align: center;
}
```
